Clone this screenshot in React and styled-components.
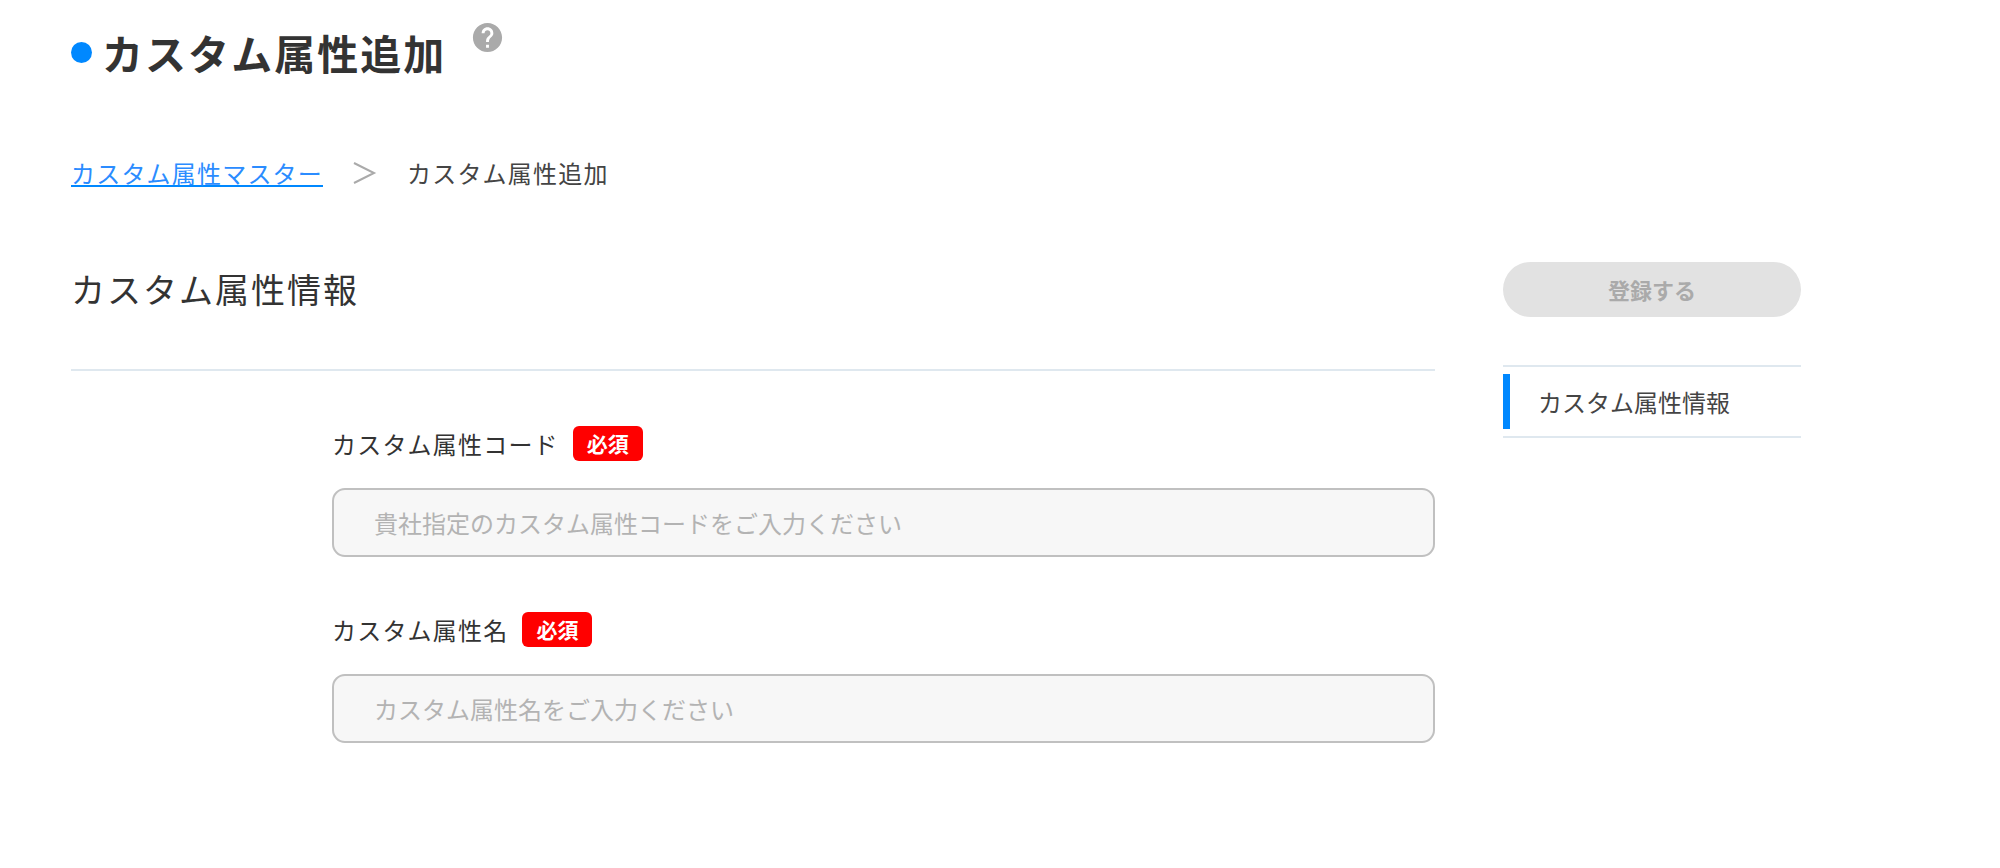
import React, { useState } from 'react';
import styled, { createGlobalStyle } from 'styled-components';
import { MdHelp } from 'react-icons/md';

const GlobalStyle = createGlobalStyle`
    * {
        box-sizing: border-box;
    }
    body {
        margin: 0;
        background: #ffffff;
        color: #333333;
        font-family: "Noto Sans CJK JP", "Noto Sans", sans-serif;
        font-size: 24px;
        line-height: 36px;
    }
    h1, h2, ol, ul {
        margin: 0;
        padding: 0;
    }
    ol, ul {
        list-style: none;
    }
`;

const Page = styled.div`
    padding: 20px 199px 60px 71px;
`;

const Header = styled.header`
    display: flex;
    align-items: flex-start;
    gap: 24px;
`;

const Title = styled.h1`
    display: flex;
    align-items: center;
    gap: 10px;
    font-size: 41px;
    line-height: 64px;
    font-weight: bold;
    letter-spacing: 0.05em;

    &::before {
        content: '';
        width: 21px;
        height: 21px;
        border-radius: 50%;
        background: #0088ff;
    }
`;

const HelpButton = styled.button`
    display: flex;
    padding: 0;
    border: none;
    background: none;
    color: #aaaaaa;
    font-size: 35px;
    cursor: pointer;
`;

const Breadcrumb = styled.ol`
    display: flex;
    align-items: center;
    margin-top: 71px;
    color: #444444;
    letter-spacing: 0.05em;

    li {
        display: flex;
        align-items: center;
    }
    a {
        color: #2b8cff;
        text-decoration: underline;
        text-decoration-color: #0088ff;
        text-decoration-thickness: 2px;
        text-underline-offset: 2px;
        text-decoration-skip-ink: none;
    }
    svg {
        margin: 0 30px;
    }
`;

const Layout = styled.div`
    display: grid;
    grid-template-columns: minmax(0, 1fr) 298px;
    gap: 68px;
    align-items: start;
    margin-top: 71px;
`;

const SectionTitle = styled.h2`
    padding-bottom: 54px;
    border-bottom: 2px solid #dfe8ef;
    font-size: 34px;
    line-height: 53px;
    font-weight: normal;
    letter-spacing: 2px;
`;

const Fields = styled.div`
    display: flex;
    flex-direction: column;
    gap: 55px;
    padding: 55px 0 0 261px;
`;

const FieldHeader = styled.div`
    display: flex;
    align-items: center;
    gap: 14px;
    margin-bottom: 27px;
`;

const FieldLabel = styled.label`
    line-height: 35px;
    letter-spacing: 0.05em;
`;

const Required = styled.span`
    padding: 0 14px;
    border-radius: 6px;
    background: #ff0000;
    color: #ffffff;
    font-size: 21px;
    line-height: 35px;
    font-weight: bold;
`;

const TextInput = styled.input`
    display: block;
    width: 100%;
    height: 69px;
    padding: 0 40px;
    border: 2px solid #c0c0c0;
    border-radius: 13px;
    background: #f7f7f7;
    color: #333333;
    font: inherit;

    &::placeholder {
        color: #b3b3b3;
        opacity: 1;
    }
    &:focus {
        outline: none;
        border-color: #0088ff;
    }
`;

const SubmitButton = styled.button`
    display: block;
    width: 100%;
    height: 55px;
    padding: 0 0 2px;
    border: none;
    border-radius: 28px;
    background: #0088ff;
    color: #ffffff;
    font-family: inherit;
    font-size: 22px;
    font-weight: bold;
    cursor: pointer;

    &:disabled {
        background: #e2e2e2;
        color: #aaaaaa;
        cursor: default;
    }
`;

const SideNav = styled.ul`
    margin-top: 48px;
    padding: 7px 0;
    border-top: 2px solid #dfe8ef;
    border-bottom: 2px solid #dfe8ef;
`;

const NavLink = styled.a`
    display: block;
    padding-left: 28px;
    border-left: 7px solid ${props => props.$active ? '#0088ff' : 'transparent'};
    color: #444444;
    line-height: 55px;
    text-decoration: none;
`;

const FIELDS = [
    {
        id: 'code',
        label: 'カスタム属性コード',
        placeholder: '貴社指定のカスタム属性コードをご入力ください'
    },
    {
        id: 'name',
        label: 'カスタム属性名',
        placeholder: 'カスタム属性名をご入力ください'
    }
];

const Separator = () => (
    <svg width="24" height="24" viewBox="0 0 24 24" fill="none" stroke="#aaaaaa" strokeWidth="2" aria-hidden="true">
        <path d="M1 2L21 12L1 22" />
    </svg>
)

const Field = ({field, value, onChange}) => {
    return(
        <div>
            <FieldHeader>
                <FieldLabel htmlFor={field.id}>{field.label}</FieldLabel>
                <Required>必須</Required>
            </FieldHeader>
            <TextInput
                id={field.id}
                type="text"
                placeholder={field.placeholder}
                value={value}
                required
                onChange={e => onChange(field.id, e.target.value)}/>
        </div>
    )
}

const App = () => {
    const [values, setValues] = useState({code: '', name: ''});

    const onChange = (id, value) => {
        setValues({...values, [id]: value});
    }

    return(
        <Page>
            <GlobalStyle />
            <Header>
                <Title>カスタム属性追加</Title>
                <HelpButton type="button" aria-label="ヘルプ">
                    <MdHelp />
                </HelpButton>
            </Header>
            <Breadcrumb>
                <li>
                    <a href="#master">カスタム属性マスター</a>
                    <Separator />
                </li>
                <li>カスタム属性追加</li>
            </Breadcrumb>
            <Layout>
                <main id="info">
                    <SectionTitle>カスタム属性情報</SectionTitle>
                    <Fields>
                        {
                            FIELDS.map(field => (
                                <Field
                                    field={field}
                                    value={values[field.id]}
                                    onChange={onChange}
                                    key={field.id}/>
                            ))
                        }
                    </Fields>
                </main>
                <aside>
                    <SubmitButton type="submit" disabled={!values.code || !values.name}>
                        登録する
                    </SubmitButton>
                    <SideNav>
                        <li>
                            <NavLink href="#info" $active>カスタム属性情報</NavLink>
                        </li>
                    </SideNav>
                </aside>
            </Layout>
        </Page>
    );
}

export default App;
